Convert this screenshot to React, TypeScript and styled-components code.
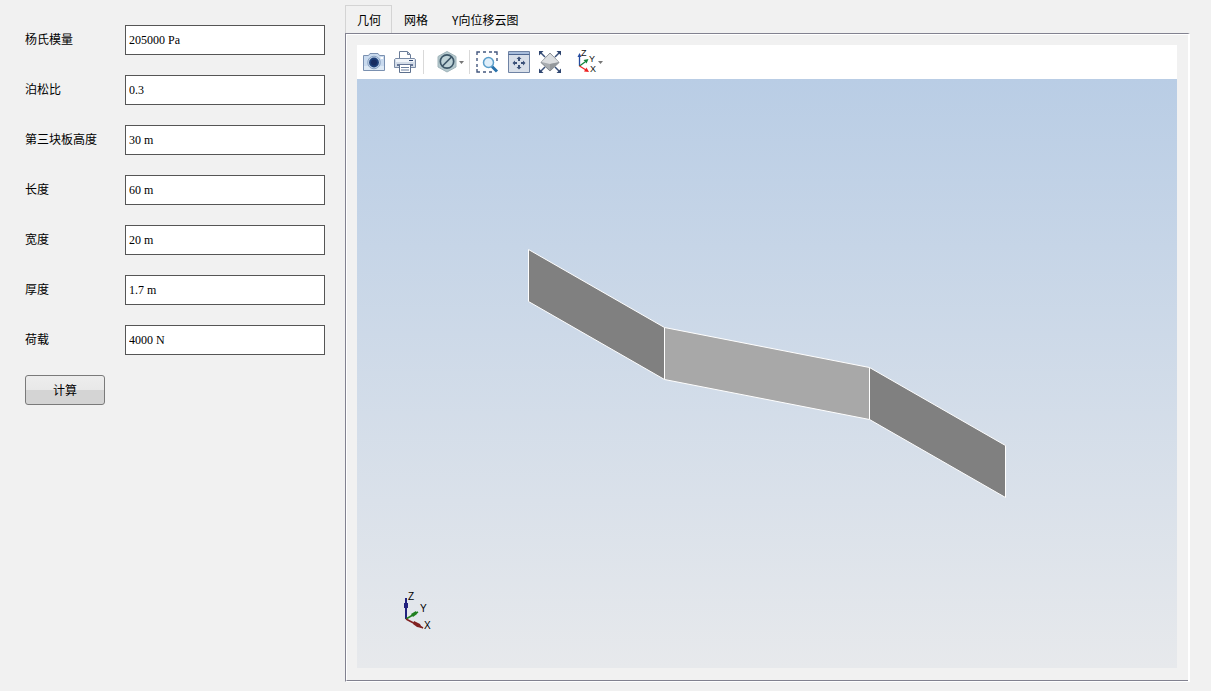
import React, { useState } from 'react';
import styled, { createGlobalStyle } from 'styled-components';

const GlobalStyle = createGlobalStyle`
  *, *::before, *::after { box-sizing: border-box; }
  body {
    margin: 0;
    background: #f1f1f1;
    color: #000;
    font: 12px/16px "Noto Sans CJK SC", sans-serif;
  }
`;

const Page = styled.div`
  display: flex;
  align-items: stretch;
  min-height: 100vh;
  padding: 5px 21px 9px 25px;
`;

const Form = styled.form`
  flex: none;
  display: flex;
  flex-direction: column;
  align-items: flex-start;
  gap: 20px;
  padding-top: 20px;
  margin-right: 20px;
`;

const Field = styled.div`
  display: flex;
  align-items: center;
`;

const FieldLabel = styled.label`
  width: 100px;
  padding-bottom: 2px;
`;

const FieldInput = styled.input`
  width: 200px;
  height: 30px;
  padding: 0 3px;
  border: 1px solid #555;
  border-radius: 0;
  background: #fff;
  color: #000;
  font: 12px/16px "Liberation Serif", "Noto Sans CJK SC", serif;
`;

const ComputeButton = styled.button`
  width: 80px;
  height: 30px;
  padding: 0;
  border: 1px solid #7a7a7a;
  border-radius: 3px;
  background: linear-gradient(#ededed 0, #e8e8e8 50%, #d4d4d4 50%, #d4d4d4 100%);
  color: #000;
  font: inherit;
`;

const Workspace = styled.main`
  flex: 1;
  min-width: 0;
  display: flex;
  flex-direction: column;
`;

const TabList = styled.div`
  display: flex;
  height: 28px;
`;

const Tab = styled.button<{ $active: boolean }>`
  height: ${p => (p.$active ? 29 : 28)}px;
  padding: 0 ${p => (p.$active ? 10 : 11)}px 0 11px;
  border: 1px solid ${p => (p.$active ? '#d4d4d4' : 'transparent')};
  border-bottom: 0;
  background: ${p => (p.$active ? '#f1f1f1' : 'transparent')};
  color: #000;
  font: inherit;
`;

const Panel = styled.section`
  flex: 1;
  display: flex;
  border: solid #828290;
  border-width: 1px 0 0 1px;
  border-right: 2px solid #fff;
  border-bottom: 1px solid #fff;
`;

const PanelInner = styled.div`
  flex: 1;
  min-width: 0;
  display: flex;
  flex-direction: column;
  padding: 10px 11px 12px 10px;
  border: solid #fff;
  border-width: 1px 0 0 1px;
  border-bottom: 1px solid #828290;
`;

const Toolbar = styled.div`
  display: flex;
  align-items: center;
  height: 34px;
  padding: 0 4px;
  background: #fff;
`;

const ToolButton = styled.button<{ $wide?: boolean; $space?: number }>`
  display: flex;
  align-items: center;
  flex: none;
  width: ${p => (p.$wide ? 32 : 26)}px;
  height: 28px;
  margin-right: ${p => p.$space ?? 0}px;
  padding: 0;
  border: 0;
  background: transparent;
`;

const Divider = styled.span<{ $space: number }>`
  flex: none;
  width: 1px;
  height: 24px;
  margin-right: ${p => p.$space}px;
  background: #d9d9d9;
`;

const Viewport = styled.div`
  flex: 1;
  display: flex;
  background: linear-gradient(#b9cde5, #e7e9ec);
`;

const Scene = styled.svg`
  display: block;
  flex: 1;
  width: 100%;
  min-height: 300px;
  font: 10px "Liberation Sans", sans-serif;
`;

const CameraIcon = () => (
  <svg width="26" height="26" viewBox="0 0 26 26" aria-hidden="true">
    <path d="M2.500 6.500H7.500L9 4.500H17L18.500 6.500H23.500V21.500H2.500Z" fill="#c9daee" stroke="#7a90b0" strokeLinejoin="round" />
    <path d="M3 17H23V21H3Z" fill="#dde9f5" />
    <circle cx="13" cy="13.500" r="6.300" fill="#c3d5ea" stroke="#8ba3c2" />
    <circle cx="13" cy="13.500" r="4.900" fill="#1d3f78" />
    <circle cx="13" cy="13.500" r="3" fill="#172c60" />
    <path d="M19.500 9H22" stroke="#fff" strokeWidth="2" />
  </svg>
);

const PrinterIcon = () => (
  <svg width="26" height="26" viewBox="0 0 26 26" aria-hidden="true">
    <path d="M7.500 10V2.500H15.500L18.500 5.500V10" fill="#fff" stroke="#6a7c98" />
    <path d="M15.500 3V5.500H18" fill="#c8d2e0" stroke="#6a7c98" />
    <path d="M3.500 9.500H22.500L23.500 10.500V18.500H2.500V10.500Z" fill="#d3dce8" stroke="#7a8ba6" />
    <path d="M4 10H22V13H4Z" fill="#f1f5fa" />
    <path d="M17 11.500H21" stroke="#2c4470" />
    <path d="M5 16H21" stroke="#40557c" strokeWidth="1.500" />
    <path d="M7.500 16V23.500H18.500V16" fill="#fff" stroke="#5d708e" />
    <path d="M9 18.500H17M9 21H17" stroke="#6b7f9f" />
  </svg>
);

const DropArrow = () => <path d="M24 12H29L26.500 15Z" fill="#777" />;

const ClipIcon = () => (
  <svg width="32" height="26" viewBox="0 0 32 26" aria-hidden="true">
    <path d="M12 2.500L21 7.500V18L12 23L3 18V7.500Z" fill="#b4c8cd" stroke="#a0b4ba" />
    <circle cx="12" cy="12.500" r="6.700" fill="#bfd3d8" stroke="#3c5668" strokeWidth="1.700" />
    <path d="M7.500 17L16.500 8" stroke="#3c5668" strokeWidth="1.700" />
    <DropArrow />
  </svg>
);

const ZoomBoxIcon = () => (
  <svg width="26" height="26" viewBox="0 0 26 26" aria-hidden="true">
    <path d="M3 6V3H6M9 3H12M15 3H18M20 3H23V6M3 9V12M3 15V18M3 20V23H6M9 23H12M15 23H18M23 9V12" fill="none" stroke="#44587f" strokeWidth="1.400" />
    <path d="M18 17.500L23 22.500" stroke="#2771ab" strokeWidth="3" />
    <circle cx="14.500" cy="13.500" r="5" fill="#e0effa" stroke="#5b9fcb" strokeWidth="1.500" />
  </svg>
);

const FitIcon = () => (
  <svg width="26" height="26" viewBox="0 0 26 26" aria-hidden="true">
    <path d="M2.500 2.500H23.500V23.500H2.500Z" fill="#d8dfe9" stroke="#6f83a4" />
    <path d="M3 3H23V5H3Z" fill="#a9bedc" />
    <path d="M2.500 5.500H23.500" stroke="#4e6690" />
    <path d="M13 7.500L15.500 10H14V12H12V10H10.500ZM13 20.500L15.500 18H14V16H12V18H10.500ZM6.500 14L9 11.500V13H11V15H9V16.500ZM19.500 14L17 11.500V13H15V15H17V16.500Z" fill="#3a5078" />
  </svg>
);

const ExtentsIcon = () => (
  <svg width="26" height="26" viewBox="0 0 26 26" aria-hidden="true">
    <path d="M13 4L22 13.500L13 22L4 13.500Z" fill="#a9adb1" stroke="#80868c" />
    <path d="M13 4.500L21.500 13L13 15L4.500 13Z" fill="#dcdee0" />
    <path d="M13 15L21.500 13.500L13 21.500Z" fill="#94989c" />
    <path d="M4 4L8 8M22 4L18 8M4 22L8 18M22 22L18 18" stroke="#3a5078" strokeWidth="1.500" />
    <path d="M2 2H6.500L2 6.500ZM24 2V6.500L19.500 2ZM2 24V19.500L6.500 24ZM24 24H19.500L24 19.500Z" fill="#2e456f" />
  </svg>
);

const AxesIcon = () => (
  <svg width="32" height="26" viewBox="0 0 32 26" aria-hidden="true">
    <path d="M5.500 17V7" stroke="#264ca0" strokeWidth="1.300" />
    <path d="M3.500 8L5.500 4L7.500 8Z" fill="#264ca0" />
    <path d="M5.500 17L11 13" stroke="#15843b" strokeWidth="1.300" />
    <path d="M9.500 11L14.500 10L12.500 14.500Z" fill="#15843b" />
    <path d="M5.500 17L12 21" stroke="#e22" strokeWidth="1.300" />
    <path d="M12.500 18.500L15 23L10 22.500Z" fill="#e22" />
    <g fontFamily="Liberation Sans, sans-serif" fontSize="9" fill="#111">
      <text x="7" y="7">Z</text>
      <text x="15" y="13">Y</text>
      <text x="16" y="23">X</text>
    </g>
    <DropArrow />
  </svg>
);

const GeometryScene = () => (
  <Scene viewBox="0 0 820 589" role="img" aria-label="几何">
    <g stroke="#fff" strokeLinejoin="round">
      <path d="M171.500 170.500L307.500 248.500V300.500L171.500 222.500Z" fill="#808080" />
      <path d="M307.500 248.500L512.500 288.500V340.500L307.500 300.500Z" fill="#a8a8a8" />
      <path d="M512.500 288.500L648.500 366.500V418.500L512.500 340.500Z" fill="#808080" />
    </g>
    <path d="M49 540V519" stroke="#20207e" strokeWidth="2" />
    <path d="M47 524H51V529H47Z" fill="#20207e" />
    <path d="M49 540L61 533" stroke="#20801f" strokeWidth="1.500" />
    <path d="M54 535L59 532L60 535L56 538Z" fill="#20801f" />
    <path d="M49 540L66 549" stroke="#802020" strokeWidth="1.500" />
    <path d="M57 542L63 545L65 549L60 548L56 545Z" fill="#802020" />
    <text x="51" y="521">Z</text>
    <text x="63" y="533">Y</text>
    <text x="67" y="550">X</text>
  </Scene>
);

const FIELDS = [
  { id: 'young', label: '杨氏模量', value: '205000 Pa' },
  { id: 'poisson', label: '泊松比', value: '0.3' },
  { id: 'height3', label: '第三块板高度', value: '30 m' },
  { id: 'length', label: '长度', value: '60 m' },
  { id: 'width', label: '宽度', value: '20 m' },
  { id: 'thickness', label: '厚度', value: '1.7 m' },
  { id: 'load', label: '荷载', value: '4000 N' },
];

const TABS = ['几何', '网格', 'Y向位移云图'];

export default function App() {
  const [tab, setTab] = useState(0);
  return (
    <Page>
      <GlobalStyle />
      <Form onSubmit={e => e.preventDefault()}>
        {FIELDS.map(f => (
          <Field key={f.id}>
            <FieldLabel htmlFor={f.id}>{f.label}</FieldLabel>
            <FieldInput id={f.id} type="text" defaultValue={f.value} />
          </Field>
        ))}
        <ComputeButton type="submit">计算</ComputeButton>
      </Form>
      <Workspace>
        <TabList role="tablist">
          {TABS.map((name, i) => (
            <Tab key={name} type="button" role="tab" aria-selected={i === tab} $active={i === tab} onClick={() => setTab(i)}>
              {name}
            </Tab>
          ))}
        </TabList>
        <Panel role="tabpanel">
          <PanelInner>
            <Toolbar role="toolbar">
              <ToolButton type="button" $space={5}><CameraIcon /></ToolButton>
              <ToolButton type="button" $space={5}><PrinterIcon /></ToolButton>
              <Divider $space={11} />
              <ToolButton type="button" $wide $space={2}><ClipIcon /></ToolButton>
              <Divider $space={4} />
              <ToolButton type="button" $space={6}><ZoomBoxIcon /></ToolButton>
              <ToolButton type="button" $space={5}><FitIcon /></ToolButton>
              <ToolButton type="button" $space={11}><ExtentsIcon /></ToolButton>
              <ToolButton type="button" $wide><AxesIcon /></ToolButton>
            </Toolbar>
            <Viewport>
              <GeometryScene />
            </Viewport>
          </PanelInner>
        </Panel>
      </Workspace>
    </Page>
  );
}
